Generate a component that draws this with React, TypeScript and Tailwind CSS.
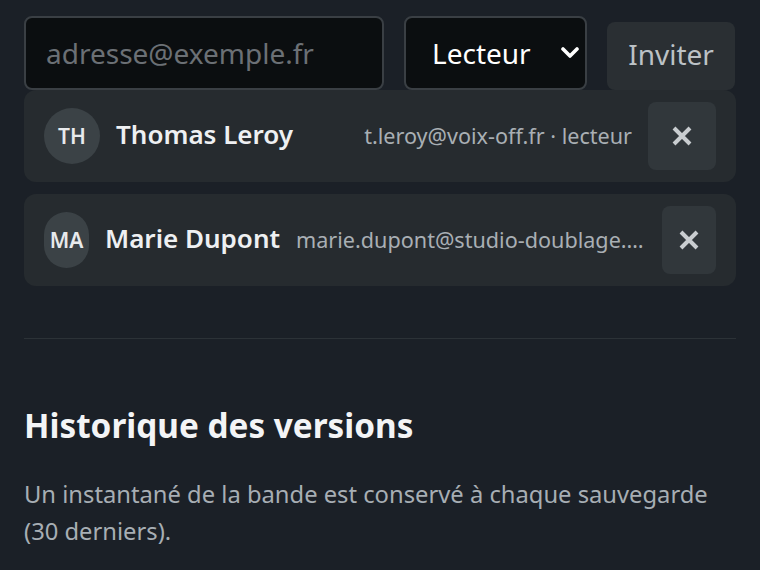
import React from "react";

function XIcon() {
  return (
    <svg width="22" height="22" viewBox="0 0 22 22" fill="none">
      <path d="M3 3L19 19M19 3L3 19" stroke="#c9cdd0" strokeWidth="4" strokeLinecap="butt" />
    </svg>
  );
}

function Chevron() {
  return (
    <svg width="18" height="12" viewBox="0 0 18 12" fill="none">
      <path d="M2 2L9 9L16 2" stroke="#ffffff" strokeWidth="3.6" strokeLinecap="round" strokeLinejoin="round" />
    </svg>
  );
}

export default function App() {
  return (
    <div
      className="min-h-screen w-full bg-[#1b2027] px-6 pt-4"
      style={{ fontFamily: '"Noto Sans", "Open Sans", sans-serif' }}
    >
      <div className="flex items-end gap-5">
        <input
          className="h-[74px] w-[360px] rounded-lg border-2 border-[#3a3f44] bg-[#0b0e10] px-5 text-[28px] text-white outline-none placeholder:text-[#6b7075]"
          placeholder="adresse@exemple.fr"
        />
        <div className="flex h-[74px] w-[183px] items-center justify-between rounded-lg border-2 border-[#3a3f44] bg-[#0b0e10] pl-[26px] pr-[6px]">
          <span className="text-[28px] text-white">Lecteur</span>
          <Chevron />
        </div>
        <button className="flex h-[68px] w-[128px] items-center justify-center rounded-lg bg-[#2a2f33] pb-1 text-[28px] text-[#bcc2c6]">
          Inviter
        </button>
      </div>

      <div className="flex h-[92px] items-center gap-4 rounded-xl bg-[#262b2f] px-5">
        <div className="flex h-14 w-14 shrink-0 items-center justify-center rounded-full bg-[#3b4246] pt-[1px] text-[21px] font-semibold text-[#e8eaec]">
          TH
        </div>
        <div className="whitespace-nowrap pb-[3px] text-[26px] font-semibold text-[#eef0f2]">Thomas Leroy</div>
        <div className="ml-auto min-w-0 truncate text-[21.6px] text-[#a9afb4]">t.leroy@voix-off.fr · lecteur</div>
        <button className="flex h-[68px] w-[68px] shrink-0 items-center justify-center rounded-lg bg-[#31373b]">
          <XIcon />
        </button>
      </div>

      <div className="mt-3 flex h-[92px] items-center gap-4 rounded-xl bg-[#262b2f] px-5">
        <div className="flex h-14 w-[45px] shrink-0 items-center justify-center rounded-full bg-[#3b4246] pt-[1px] text-[21px] font-semibold text-[#e8eaec]">
          MA
        </div>
        <div className="whitespace-nowrap pb-[3px] text-[26px] font-semibold text-[#eef0f2]">Marie Dupont</div>
        <div className="min-w-0 flex-1 truncate text-[21.6px] text-[#a9afb4]">
          marie.dupont@studio-doublage.fr · éditeur
        </div>
        <button className="flex h-[68px] w-[54px] shrink-0 items-center justify-center rounded-lg bg-[#31373b]">
          <XIcon />
        </button>
      </div>

      <div className="mt-[52px] border-t border-[#2c3237]" />

      <h2 className="mt-[66px] text-[33.3px] font-bold leading-[40px] text-[#f3f4f6]">Historique des versions</h2>
      <p className="mt-[31px] text-[23.75px] leading-[37px] text-[#a7aeb4]">
        Un instantané de la bande est conservé à chaque sauvegarde (30 derniers).
      </p>
    </div>
  );
}
